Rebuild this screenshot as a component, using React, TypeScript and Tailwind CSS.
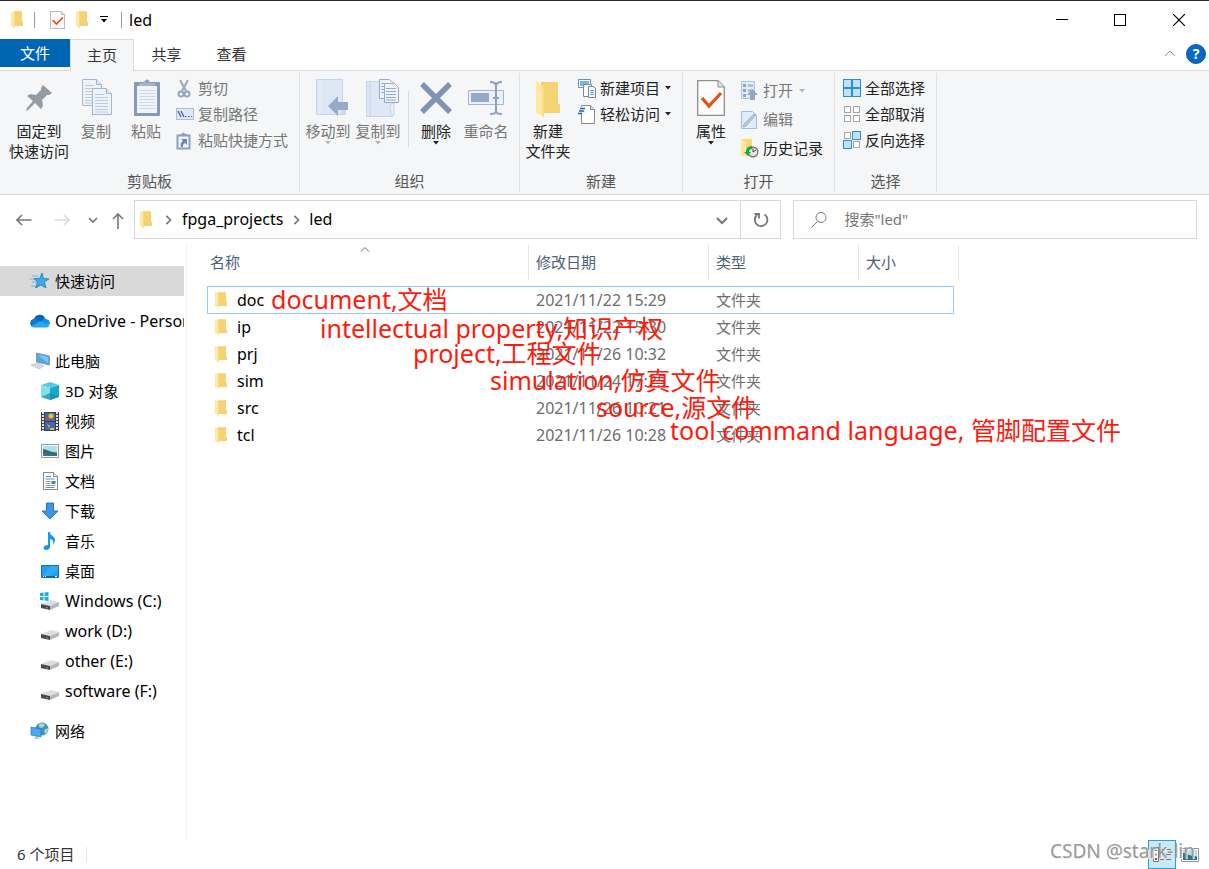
import React from 'react';

type IconProps = { className?: string };

function Folder({ className = 'w-4 h-4' }: IconProps) {
  return (
    <svg viewBox="0 0 24 34" preserveAspectRatio="none" className={className}>
      <path d="M5 1h17v20l2 2v7H5z" fill="#f0c860" />
      <path d="M7 1h15v20l2 2v7H7z" fill="#f5d274" />
      <path d="M0 0l8 5v29l-8-4z" fill="#ffe8a0" />
      <path d="M6 4l2 1v29l-2-1z" fill="#fdda83" />
    </svg>
  );
}

function CheckedPage({ className }: IconProps) {
  return (
    <svg viewBox="0 0 28 36" preserveAspectRatio="none" className={className}>
      <path d="M.7.7H21l6.300 6.300v28.300H.7z" fill="#fcfcfc" stroke="#8e8e8e" strokeWidth="1.300" />
      <path d="M21 .7V7h6.300" fill="#e4e4e4" stroke="#8e8e8e" />
      <path d="M5 18l7 8L24 13" fill="none" stroke="#e8500f" strokeWidth="3.200" />
    </svg>
  );
}

function Caret({ className = 'text-[#222]' }: IconProps) {
  return (
    <svg viewBox="0 0 6 4" className={`w-[6px] h-[4px] ${className}`}>
      <path d="M0 0h6L3 3.500z" fill="currentColor" />
    </svg>
  );
}

function Chevron({ className }: IconProps) {
  return (
    <svg viewBox="0 0 12 12" className={className} fill="none" stroke="currentColor">
      <path d="M1 4l5 5 5-5" />
    </svg>
  );
}

function Pin() {
  return (
    <svg viewBox="0 0 26 26" className="w-[26px] h-[26px] mt-[6px]">
      <path d="M17 0l9 8-3 2h-2l-5 5 1 6-2 3-6-6-7 7-2 1 1-3 6-7-6-5 3-2 6 1 5-5V3z" fill="#929ba1" />
    </svg>
  );
}

function PageLines({ x, y }: { x: number; y: number }) {
  return (
    <g transform={`translate(${x} ${y})`}>
      <path d="M.5.500h14l5 5v21H.5z" fill="#eef3fa" stroke="#a6b6cf" />
      <path d="M14.500.500v5h5" fill="#dbe5f3" stroke="#a6b6cf" />
      <path d="M3 6.500h9M3 9.500h13M3 12.500h13M3 15.500h13M3 18.500h13M3 21.500h13M3 24h13" stroke="#bccadf" />
    </g>
  );
}

function Copy() {
  return (
    <svg viewBox="0 0 31 37" className="w-[31px] h-[37px] ml-[2px]">
      <PageLines x={0} y={0} />
      <PageLines x={10} y={9} />
    </svg>
  );
}

function Paste() {
  return (
    <svg viewBox="0 0 26 37" className="w-[26px] h-[37px] ml-[2px]">
      <rect y="3" width="26" height="34" rx="1" fill="#8499bb" />
      <rect x="3" y="7" width="20" height="27" fill="#f0f5fc" />
      <path d="M5 11.500h16M5 14.500h16M5 17.500h16M5 20.500h16M5 23.500h16M5 26.500h16M5 29.500h16" stroke="#cbd8ea" />
      <path d="M5 7V4h5a3 3 0 0 1 6 0h5v3z" fill="#a3b5d0" />
      <circle cx="13" cy="2.500" r="2" fill="#8da2c3" />
    </svg>
  );
}

function Cut() {
  return (
    <svg viewBox="0 0 16 19" className="w-4 h-[19px]" fill="none" stroke="#94a5c1">
      <path d="M4 1l6 11M12 1L6 12" strokeWidth="2" />
      <circle cx="5" cy="15" r="2.500" strokeWidth="2" />
      <circle cx="11" cy="15" r="2.500" strokeWidth="2" />
    </svg>
  );
}

function PathIcon() {
  return (
    <svg viewBox="0 0 18 12" className="w-[18px] h-3">
      <rect x=".5" y=".5" width="17" height="11" fill="#dce8f8" stroke="#aebdd3" />
      <path d="M2 3l3 6M5 3l3 6" stroke="#48617f" strokeWidth="1.300" />
      <path d="M9 8.500h1.500M12 8.500h1.500M15 8.500h1" stroke="#48617f" />
    </svg>
  );
}

function ShortcutIcon() {
  return (
    <svg viewBox="0 0 15 19" className="w-[15px] h-[19px]">
      <path d="M.5 3.500h14v15H.5z" fill="#8b9fbe" />
      <path d="M2.500 5.500h10v11h-10z" fill="#f0f5fc" />
      <path d="M4 5V3h2a1.500 1.500 0 0 1 3 0h2v2z" fill="#8b9fbe" />
      <path d="M5 8h6v6l-2-2c-2 1-2 2-2 4H5c-1-3 0-5 2-6z" fill="#6d86ad" />
    </svg>
  );
}

function MoveTo() {
  return (
    <svg viewBox="0 0 32 37" className="w-8 h-[37px] ml-2">
      <path d="M.5.500h26v35H.5z" fill="#dde7f5" stroke="#c5d4ea" />
      <path d="M4 1v34" stroke="#eaf0f9" />
      <path d="M26 22l4 3v11h-5z" fill="#ccd9ed" />
      <path d="M12 27l10-10v6h10v8H22v6z" fill="#98aac8" />
    </svg>
  );
}

function CopyTo() {
  return (
    <svg viewBox="0 0 33 38" className="w-[33px] h-[38px] ml-2">
      <path d="M.5 2.500h26v35H.5z" fill="#dde7f5" stroke="#c5d4ea" />
      <path d="M4 3v34M24 26l4-2v12l-3 1z" stroke="#c5d4ea" fill="#e8effa" />
      <g fill="#eef4fc" stroke="#98aac8">
        <path d="M13.500.500h10l3 3v16h-13z" />
        <path d="M18.500 4.500h10l4 4v15h-14z" />
        <path d="M15 4.500h3M15 7.500h3M15 10.500h3M15 13.500h3M20 9.500h10M20 12.500h10M20 15.500h10M20 18.500h10M20 21h10" />
      </g>
    </svg>
  );
}

function Delete() {
  return (
    <svg viewBox="0 0 32 32" className="w-8 h-8 mt-[3px]">
      <path d="M2 2l28 28M30 2L2 30" stroke="#8093b4" strokeWidth="5.500" />
    </svg>
  );
}

function Rename() {
  return (
    <svg viewBox="0 0 37 36" className="w-[37px] h-9 mt-[2px]" fill="none">
      <path d="M.5 9.500h35v14H.5z" fill="#eaf1fb" stroke="#a5b5ce" />
      <path d="M3 12h18v9H3z" fill="#95a8c7" />
      <path d="M22 1c4 0 6 1 6 4v25c0 2-2 3-6 3M34 1c-4 0-6 1-6 4v25c0 2 2 3 6 3M25 17h6" stroke="#8b9fbe" strokeWidth="2" />
    </svg>
  );
}

function NewItem() {
  return (
    <svg viewBox="0 0 18 19" className="w-[18px] h-[19px]" fill="#fff" stroke="#7f8c99">
      <path d="M.5.500h12v8H.5z" />
      <path d="M2 2h9v5H2z" fill="#6dbbea" stroke="none" />
      <path d="M5.500 5.500h8v12h-8z" />
      <path d="M10.500 7.500h5l2 2v9h-7z" stroke="#6888a8" />
      <path d="M12 11.500h4M12 13.500h4M12 15.500h4" stroke="#6fa2d4" />
    </svg>
  );
}

function EasyAccess() {
  return (
    <svg viewBox="0 0 18 19" className="w-[18px] h-[19px]">
      <path d="M3.500.500h9l4 4v14h-13z" fill="#fff" stroke="#888" />
      <path d="M12.500.500v4h4" fill="#ddd" stroke="#888" />
      <path d="M0 2h8v7H0z" fill="#f5f6f7" />
      <path d="M2 3.500h5M1 6h5M0 8.500h4" stroke="#1769ae" strokeWidth="1.500" />
    </svg>
  );
}

function OpenIcon() {
  return (
    <svg viewBox="0 0 17 19" className="w-[17px] h-[19px]">
      <path d="M.5.500h13v17H.5z" fill="#e1eaf7" stroke="#b3c2d9" />
      <path d="M2 3h3v3H2zM2 8h3v3H2zM2 13h3v3H2z" fill="#8fa3c3" />
      <path d="M7 4.500h5M7 9.500h5" stroke="#9cafcc" strokeWidth="2" />
      <path d="M6 14l5.500-6 5.500 6h-3v5H9v-5z" fill="#92a6c5" />
    </svg>
  );
}

function EditIcon() {
  return (
    <svg viewBox="0 0 17 18" className="w-[17px] h-[18px]">
      <path d="M.5.500h11l4 4v13H.5z" fill="#e1ecfa" stroke="#a9bad3" />
      <path d="M3 13L13 3l2 1L5 15l-3 1z" fill="#b7cbe6" stroke="#8ba1c3" strokeWidth=".7" />
    </svg>
  );
}

function History() {
  return (
    <svg viewBox="0 0 18 19" className="w-[18px] h-[19px]">
      <path d="M1 0h10v17H1z" fill="#f7d778" />
      <path d="M0 0l5 3v15l-5-2z" fill="#ffe8a0" />
      <circle cx="12" cy="13" r="4.800" fill="#e5e8e8" stroke="#777" strokeWidth="1.400" />
      <path d="M12 13l3-2M12 13V9.500" stroke="#444" fill="none" />
      <path d="M11 7c-4 0-6 2-6 6H3l4 4 3-4H8c0-2 1-3 3-3z" fill="#22a83a" />
    </svg>
  );
}

// each flag marks one of the four tiles as filled
function Tiles({ on }: { on: boolean[] }) {
  return (
    <svg viewBox="0 0 18 18" className="w-[18px] h-[18px]">
      {on.map((filled, i) => {
        const x = (i % 2) * 9;
        const y = Math.floor(i / 2) * 9;
        return filled ? (
          <rect key={i} x={x + 0.5} y={y + 0.5} width="8" height="8" fill="#bfe3fb" stroke="#2a8fe0" />
        ) : (
          <rect key={i} x={x + 1.5} y={y + 1.5} width="6" height="6" fill="#fff" stroke="#a5a5a5" />
        );
      })}
    </svg>
  );
}

function Star() {
  return (
    <svg viewBox="0 0 20 18" className="w-5 h-[18px]">
      <path d="M2 4h6M0 7h5M2 10h5M1 14h4" stroke="#70b9e6" />
      <path d="M12 1l1.500 5.500 5.500.300-4.600 3.300L16 16l-5-3-5.500 3 2-6L4 6.500h5.500z" fill="#3ca9ec" stroke="#1b7dbd" strokeWidth=".8" />
    </svg>
  );
}

function Cloud() {
  return (
    <svg viewBox="0 0 20 14" className="w-5 h-[14px]">
      <path d="M4 5a6 6 0 0 1 11-1l-2 6-9 1z" fill="#0364b8" />
      <path d="M14 4a5 5 0 0 1 3 1.500c3 .5 3 3.500 3 5H9z" fill="#1490df" />
      <path d="M4.500 4.500c3 0 4 1 6 2.500L3 13c-4-1-4-7.500 1.500-8.500z" fill="#0f78d4" />
      <path d="M1.500 12l9-5 9 4.500c-1 1.800-2 2-4 2h-11c-1.500 0-2.500-.5-3-1.500z" fill="#28a8ea" />
    </svg>
  );
}

function Computer() {
  return (
    <svg viewBox="0 0 20 18" className="w-5 h-[18px]">
      <path d="M6.500 1l13 3v9l-13-3z" fill="#4ea9e4" stroke="#8d99a3" />
      <path d="M8 3l10 8V5z" fill="#7dc9f5" />
      <path d="M1 13l6-2 7 3-5 3z" fill="#d5dade" stroke="#b3b9be" strokeWidth=".6" />
    </svg>
  );
}

function Cube() {
  return (
    <svg viewBox="0 0 18 18" className="w-[18px] h-[18px]">
      <path d="M9 0l9 3-9 3-9-3z" fill="#50cde0" />
      <path d="M0 3l9 3v12l-9-3z" fill="#82e0ea" />
      <path d="M18 3L9 6v12l9-3z" fill="#17a9c7" />
      <path d="M0 15l9-4 9 4-9 3z" fill="#128fae" opacity=".7" />
    </svg>
  );
}

function Film() {
  return (
    <svg viewBox="0 0 18 19" className="w-[18px] h-[19px]">
      <path d="M0 0h18v19H0z" fill="#3f3f3f" />
      <path d="M2 0v19M16 0v19" stroke="#e6e6e6" strokeWidth="2" strokeDasharray="2 1" />
      <path d="M4 1h10v8H4zM4 10h10v8H4z" fill="#3d68bd" />
      <circle cx="10" cy="4" r="2.500" fill="#eac52d" />
      <path d="M5 5h3v3H5zM10 7h3v2h-3z" fill="#c84b31" />
      <path d="M6 12l3 2-1 2zM9 16h4v2H9z" fill="#e7bd34" />
    </svg>
  );
}

function Picture() {
  return (
    <svg viewBox="0 0 18 14" className="w-[18px] h-[14px]">
      <path d="M.5.500h17v13H.5z" fill="#fff" stroke="#979797" />
      <path d="M2 2h14v10H2z" fill="#b5dcf6" />
      <path d="M2 5c3 0 6 3 14 3.500V10H2z" fill="#32704f" />
      <path d="M2 9l14 1v2H2z" fill="#2c70a8" />
    </svg>
  );
}

function Doc() {
  return (
    <svg viewBox="0 0 15 18" className="w-[15px] h-[18px]">
      <path d="M.5.500h10l4 4v13H.5z" fill="#fff" stroke="#888" />
      <path d="M10.500.500v4h4" fill="#e5e5e5" stroke="#888" />
      <path d="M3 4.500h5M2.500 7h9M2.500 15.500h9" stroke="#5195cf" />
      <path d="M2.500 9.500h5M2.500 11.500h5M2.500 13.500h10" stroke="#999" />
      <path d="M8.500 9h4v3h-4z" fill="#4185be" />
    </svg>
  );
}

function Download() {
  return (
    <svg viewBox="0 0 18 18" className="w-[18px] h-[18px]">
      <path d="M5.500 1h7v8H17l-8 8-8-8h4.500z" fill="#3c96e5" stroke="#2b76bb" />
    </svg>
  );
}

function Music() {
  return (
    <svg viewBox="0 0 14 18" className="w-[14px] h-[18px]">
      <path d="M7 0c0 4 5 4 5 8 0 2-1 4-2 5 1-4 0-5-3-6v7c0 3-2 4-4 4-4 0-3-5 2-5V0z" fill="#1398f3" />
    </svg>
  );
}

function Desktop() {
  return (
    <svg viewBox="0 0 18 13" className="w-[18px] h-[13px]">
      <path d="M.5.500h17v12H.5z" fill="#1d9ff4" stroke="#1470b4" />
      <path d="M9 1l8 0v3L9 11H2z" fill="#49b5fa" opacity=".5" />
      <path d="M1 11.500h16" stroke="#11639f" />
      <path d="M2 11.500h1M4 11.500h1M14 11.500h2" stroke="#fff" />
    </svg>
  );
}

function Drive({ windows }: { windows?: boolean }) {
  return (
    <svg viewBox="0 0 20 18" className="w-5 h-[18px]">
      <path d="M1 12l10-4 8 2-9 4z" fill="#dedede" />
      <path d="M1 12l9 2v4l-9-2z" fill="#454a47" />
      <path d="M10 14l9-4v4l-9 4z" fill="#b5b7b8" />
      <path d="M6 15.500l2 .5" stroke="#3fc65a" />
      {windows && <path d="M0 1l3.500-.5V4H0zM4.500.500L8.500 0v4h-4zM0 5h3.500v3.500L0 8zM4.500 5h4v4l-4-.5z" fill="#0fb1ec" />}
    </svg>
  );
}

function Network() {
  return (
    <svg viewBox="0 0 19 18" className="w-[19px] h-[18px]">
      <circle cx="12" cy="7" r="6.500" fill="#4390b8" />
      <path d="M9 2c3-2 6 0 6 1l-3 3-3-1zM14 8l4-2c0 3-1 5-3 6z" fill="#a3dbc9" />
      <path d="M1 5l10 2v8L1 13z" fill="#47aaf1" stroke="#2578b5" strokeWidth=".7" />
      <path d="M5 14l3 .5v1.500l3 1-7-.5 1-1z" fill="#aab4bb" />
    </svg>
  );
}

const places = [
  { label: '3D 对象', icon: <Cube /> },
  { label: '视频', icon: <Film /> },
  { label: '图片', icon: <Picture /> },
  { label: '文档', icon: <Doc /> },
  { label: '下载', icon: <Download /> },
  { label: '音乐', icon: <Music /> },
  { label: '桌面', icon: <Desktop /> },
  { label: 'Windows (C:)', icon: <Drive windows />, latin: true },
  { label: 'work (D:)', icon: <Drive />, latin: true },
  { label: 'other (E:)', icon: <Drive />, latin: true },
  { label: 'software (F:)', icon: <Drive />, latin: true },
];

const files = [
  { name: 'doc', date: '2021/11/22 15:29' },
  { name: 'ip', date: '2021/11/22 15:30' },
  { name: 'prj', date: '2021/11/26 10:32' },
  { name: 'sim', date: '2021/11/24 17:25' },
  { name: 'src', date: '2021/11/26 10:21' },
  { name: 'tcl', date: '2021/11/26 10:28' },
];

const notes = [
  { text: 'document,文档', place: 'left-[84px] top-[38px]' },
  { text: 'intellectual property,知识产权', place: 'left-[133px] top-[67px]' },
  { text: 'project,工程文件', place: 'left-[226px] top-[92px]' },
  { text: 'simulation,仿真文件', place: 'left-[303px] top-[119px]' },
  { text: 'source,源文件', place: 'left-[409px] top-[146px]' },
  { text: 'tool command language, 管脚配置文件', place: 'left-[483px] top-[169px]' },
];

type ButtonProps = { icon: React.ReactNode; children: React.ReactNode; off?: boolean; caret?: boolean; className?: string };

function BigButton({ icon, children, off, caret, className = 'w-[50px]' }: ButtonProps) {
  return (
    <button className={`flex shrink-0 flex-col items-center pt-1 leading-5 whitespace-nowrap ${off ? 'text-[#767676]' : 'text-[#222]'} ${className}`}>
      <span className="flex h-[42px] items-start justify-center">{icon}</span>
      <span>{children}</span>
      {caret && <Caret className={off ? 'text-[#b5b5b5]' : 'text-[#222]'} />}
    </button>
  );
}

function SmallButton({ icon, children, off, caret, className = 'h-[26px]' }: ButtonProps) {
  return (
    <button className={`flex items-center whitespace-nowrap ${off ? 'text-[#767676]' : 'text-[#222]'} ${className}`}>
      <span className="mr-[2px] flex w-5 shrink-0">{icon}</span>
      {children}
      {caret && <Caret className={off ? 'ml-[6px] text-[#b5b5b5]' : 'ml-[5px] text-[#222]'} />}
    </button>
  );
}

type GroupProps = { label: string; width: string; inset?: string; children: React.ReactNode };

function Group({ label, width, inset = 'pl-[3px]', children }: GroupProps) {
  return (
    <section className={`my-[2px] shrink-0 border-r border-[#e0e2e4] pt-[2px] ${width}`}>
      <div className={`flex h-24 ${inset}`}>{children}</div>
      <div className="text-center leading-5 text-[#555]">{label}</div>
    </section>
  );
}

function Ribbon() {
  return (
    <div className="flex h-[125px] border-y border-[#dadbdc] bg-[#f5f6f7]">
      <Group label="剪贴板" width="w-[300px]" inset="pl-[7px]">
        <BigButton icon={<Pin />} className="w-16">固定到<br />快速访问</BigButton>
        <BigButton icon={<Copy />} off>复制</BigButton>
        <BigButton icon={<Paste />} off>粘贴</BigButton>
        <div className="pl-[5px]">
          <SmallButton icon={<Cut />} off>剪切</SmallButton>
          <SmallButton icon={<PathIcon />} off>复制路径</SmallButton>
          <SmallButton icon={<ShortcutIcon />} off>粘贴快捷方式</SmallButton>
        </div>
      </Group>
      <Group label="组织" width="w-[220px]">
        <BigButton icon={<MoveTo />} off caret>移动到</BigButton>
        <BigButton icon={<CopyTo />} off caret>复制到</BigButton>
        <div className="ml-[5px] mr-[2px] mt-4 h-14 border-l border-[#dadbdc]" />
        <BigButton icon={<Delete />} caret>删除</BigButton>
        <BigButton icon={<Rename />} off>重命名</BigButton>
      </Group>
      <Group label="新建" width="w-[163px]">
        <BigButton icon={<Folder className="w-6 h-[36px] mt-[2px]" />}>新建<br />文件夹</BigButton>
        <div className="pl-[5px]">
          <SmallButton icon={<NewItem />} caret>新建项目</SmallButton>
          <SmallButton icon={<EasyAccess />} caret>轻松访问</SmallButton>
        </div>
      </Group>
      <Group label="打开" width="w-[152px]">
        <BigButton icon={<CheckedPage className="w-7 h-9 mt-px" />} caret>属性</BigButton>
        <div className="pl-[5px] pt-px">
          <SmallButton icon={<OpenIcon />} off caret className="h-[29px]">打开</SmallButton>
          <SmallButton icon={<EditIcon />} off className="h-[29px]">编辑</SmallButton>
          <SmallButton icon={<History />} className="h-[29px]">历史记录</SmallButton>
        </div>
      </Group>
      <Group label="选择" width="w-[102px]" inset="pl-2">
        <div>
          <SmallButton icon={<Tiles on={[true, true, true, true]} />}>全部选择</SmallButton>
          <SmallButton icon={<Tiles on={[false, false, false, false]} />}>全部取消</SmallButton>
          <SmallButton icon={<Tiles on={[false, true, true, false]} />}>反向选择</SmallButton>
        </div>
      </Group>
    </div>
  );
}

function TitleBar() {
  return (
    <header className="flex h-[39px] items-center border-t border-[#292730] pb-px pl-[11px]">
      <Folder className="w-3 h-[17px]" />
      <span className="ml-[11px] h-4 border-l border-[#999]" />
      <button aria-label="属性" className="ml-[15px]"><CheckedPage className="w-[15px] h-[18px]" /></button>
      <button aria-label="新建文件夹" className="ml-[11px]"><Folder className="w-3 h-[17px]" /></button>
      <button aria-label="自定义快速访问工具栏" className="ml-[12px] flex flex-col items-center gap-[2px]">
        <span className="w-2 border-t border-black" />
        <Caret className="text-black" />
      </button>
      <span className="ml-[13px] h-4 border-l border-[#999]" />
      <h1 className="ml-[7px] text-base text-black">led</h1>
      <div className="ml-auto flex h-full">
        <button aria-label="最小化" className="flex w-[58px] items-center justify-center">
          <span className="w-3 border-t border-black" />
        </button>
        <button aria-label="最大化" className="flex w-[58px] items-center justify-center">
          <span className="h-3 w-3 border border-black" />
        </button>
        <button aria-label="关闭" className="flex w-[60px] items-center justify-center">
          <svg viewBox="0 0 12 12" className="h-3 w-3" stroke="#000" strokeWidth="1.200"><path d="M0 0l12 12M12 0L0 12" /></svg>
        </button>
      </div>
    </header>
  );
}

function Tabs() {
  return (
    <nav className="relative z-10 -mb-px flex h-8 items-start text-[#333]">
      <button className="h-[28px] w-[70px] bg-[#0066b4] text-white">文件</button>
      <button className="h-8 w-16 border border-b-0 border-[#dadbdc] bg-[#f5f6f7]">主页</button>
      <button className="h-[31px] w-[65px]">共享</button>
      <button className="h-[31px] w-[65px]">查看</button>
      <div className="ml-auto flex h-[30px] items-center gap-[10px] pr-[3px]">
        <button aria-label="最小化功能区"><Chevron className="h-3 w-3 rotate-180 text-[#999]" /></button>
        <button aria-label="帮助" className="flex h-5 w-5 items-center justify-center rounded-full border border-[#155a9c] bg-[#0669c8] text-sm font-bold text-white">?</button>
      </div>
    </nav>
  );
}

function AddressBar() {
  return (
    <div className="flex pt-[5px] pb-[6px] pr-3 text-[#777]">
      <div className="flex w-[134px] shrink-0 items-center">
        <button aria-label="后退" className="ml-4">
          <svg viewBox="0 0 16 12" className="h-3 w-4" fill="none" stroke="#777" strokeWidth="1.600"><path d="M15.500 6H1M6 1L1 6l5 5" /></svg>
        </button>
        <button aria-label="前进" className="ml-[22px]">
          <svg viewBox="0 0 16 12" className="h-3 w-4" fill="none" stroke="#dcdcdc" strokeWidth="1.600"><path d="M.5 6H15M10 1l5 5-5 5" /></svg>
        </button>
        <button aria-label="最近浏览的位置" className="ml-[18px]">
          <svg viewBox="0 0 10 8" className="h-2 w-[10px]" fill="none" stroke="#777" strokeWidth="1.600"><path d="M1 2l4 4 4-4" /></svg>
        </button>
        <button aria-label="上移" className="ml-[14px]">
          <svg viewBox="0 0 12 16" className="h-4 w-3 mt-[2px]" fill="none" stroke="#777" strokeWidth="1.600"><path d="M6 16V1M1 6l5-5 5 5" /></svg>
        </button>
      </div>
      <div className="flex h-[39px] flex-[45] items-center border border-[#d9d9d9] text-base text-black">
        <Folder className="ml-[5px] w-3 h-[17px]" />
        <Chevron className="ml-[11px] h-[10px] w-[10px] -rotate-90 stroke-2 text-[#777]" />
        <button className="ml-[9px] pb-px">fpga_projects</button>
        <Chevron className="ml-[8px] h-[10px] w-[10px] -rotate-90 stroke-2 text-[#777]" />
        <button className="ml-[8px] pb-px">led</button>
        <button aria-label="以前的位置" className="ml-auto mr-3 text-[#777]"><Chevron className="h-3 w-3 stroke-2" /></button>
        <button aria-label="刷新" className="flex h-full w-10 items-center justify-center border-l border-[#d9d9d9]">
          <svg viewBox="0 0 16 16" className="h-4 w-4" fill="none" stroke="#777" strokeWidth="1.800">
            <path d="M11.500 2.500A6.300 6.300 0 1 1 4 3M1.500 2h4.500v4.500" />
          </svg>
        </button>
      </div>
      <label className="ml-3 flex h-[39px] flex-[28] items-center border border-[#d9d9d9]">
        <svg viewBox="0 0 16 16" className="ml-[17px] h-4 w-4 shrink-0" fill="none" stroke="#777">
          <circle cx="10" cy="5.500" r="5" /><path d="M6.500 9.500L.5 15.500" />
        </svg>
        <input type="text" aria-label="搜索" placeholder={'搜索"led"'} className="ml-[17px] min-w-0 flex-1 outline-none placeholder:text-[#777]" />
      </label>
    </div>
  );
}

function Sidebar() {
  return (
    <aside className="w-[187px] shrink-0 border-r border-[#f2f2f2] pt-[21px] text-black">
      <a href="#quick" className="mr-[2px] flex h-[30px] items-center bg-[#d9d9d9] pl-[30px]">
        <span className="flex w-[25px]"><Star /></span>快速访问
      </a>
      <a href="#onedrive" className="mr-[2px] mt-[10px] flex h-[30px] items-center overflow-hidden pl-[30px] text-base whitespace-nowrap">
        <span className="flex w-[25px] shrink-0"><Cloud /></span>OneDrive - Personal
      </a>
      <a href="#pc" className="mt-[10px] flex h-[30px] items-center pl-[30px]">
        <span className="flex w-[25px]"><Computer /></span>此电脑
      </a>
      <ul>
        {places.map((place) => (
          <li key={place.label}>
            <a href="#place" className={`flex h-[30px] items-center pl-[37px] ${place.latin ? 'text-base' : ''}`}>
              <span className="mr-[2px] flex w-[26px] justify-center">{place.icon}</span>
              {place.label}
            </a>
          </li>
        ))}
      </ul>
      <a href="#network" className="mt-[10px] flex h-[30px] items-center pl-[30px]">
        <span className="flex w-[25px]"><Network /></span>网络
      </a>
    </aside>
  );
}

function FileList() {
  return (
    <main className="relative min-w-0 flex-1 pl-5">
      <Chevron className="absolute left-[173px] top-0 h-[10px] w-[10px] rotate-180 text-[#555]" />
      <table className="w-[752px] table-fixed border-collapse text-left">
        <thead>
          <tr className="h-[42px] text-[#4c607a]">
            {['名称', '修改日期', '类型', '大小'].map((title, i) => (
              <th key={title} className={`p-0 align-top font-normal ${['w-[322px]', 'w-[180px]', 'w-[150px]', 'w-[100px]'][i]}`}>
                <div className={`flex h-[35px] items-center border-r border-[#e5e5e5] ${i ? 'pl-[7px]' : 'pl-[3px]'}`}>{title}</div>
              </th>
            ))}
          </tr>
        </thead>
        <tbody>
          {files.map((file, i) => (
            <tr key={file.name} className="h-[27px] leading-[27px] text-[#6d6d6d]">
              <td className="relative p-0 text-base leading-[27px] text-black">
                {i === 0 && <span className="absolute -top-px bottom-0 left-0 w-[747px] border border-[#90cdff]" />}
                <span className="flex items-center pl-2">
                  <Folder className="mr-[10px] mb-[2px] h-4 w-3" />
                  {file.name}
                </span>
              </td>
              <td className="p-0 pl-[7px] text-base leading-[27px]">{file.date}</td>
              <td className="p-0 pl-[7px]">文件夹</td>
              <td />
            </tr>
          ))}
        </tbody>
      </table>
      {notes.map((note) => (
        <p key={note.text} className={`absolute whitespace-nowrap text-[25px] leading-8 text-[#ff1a0d] ${note.place}`}>{note.text}</p>
      ))}
    </main>
  );
}

export default function App() {
  return (
    <div className="flex min-h-screen flex-col overflow-hidden bg-white font-['Noto_Sans','Noto_Sans_CJK_SC',sans-serif] text-[15px] text-[#222]">
      <TitleBar />
      <Tabs />
      <Ribbon />
      <AddressBar />
      <div className="flex flex-1">
        <Sidebar />
        <FileList />
      </div>
      <footer className="relative flex h-[29px] items-center pl-[17px] text-[#333]">
        6 个项目
        <span className="ml-3 h-4 border-l border-[#e5e5e5]" />
        <div className="ml-auto flex h-full items-center pr-[10px]">
          <button aria-label="详细信息" className="flex h-full w-7 items-center justify-center border border-[#26a0da] bg-[#cce8f6]">
            <svg viewBox="0 0 18 15" className="h-[15px] w-[18px]" stroke="#777">
              <path d="M.5.500h5v14h-5z" fill="#fff" />
              <path d="M7 2.500h4M13 2.500h5M7 7.500h4M13 7.500h5M7 12.500h4M13 12.500h5" />
              <path d="M2 3h2" stroke="#3c8ecb" strokeWidth="2" /><path d="M2 7.500h2" stroke="#d99528" strokeWidth="2" /><path d="M2 12h2" stroke="#c22b2b" strokeWidth="2" />
            </svg>
          </button>
          <button aria-label="大缩略图" className="ml-[5px]"><Picture /></button>
        </div>
        <span className="pointer-events-none absolute right-[14px] -top-[3px] text-[19px] leading-7 text-[#999] [text-shadow:1px_1px_0_#eee]">CSDN @stark-lin</span>
      </footer>
    </div>
  );
}
